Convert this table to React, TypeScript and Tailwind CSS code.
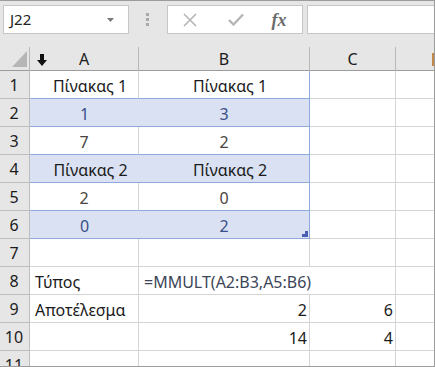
import React from 'react';

const font = { fontFamily: '"Noto Sans", "Open Sans", sans-serif' };

type Cell = { text?: string; align?: 'left' | 'center' | 'right'; tone?: string; head?: boolean };
type Row = { band?: 'white' | 'blue'; cells: Cell[] };

const rows: Row[] = [
  { band: 'white', cells: [{ text: 'Πίνακας 1', align: 'center', head: true }, { text: 'Πίνακας 1', align: 'center', head: true }] },
  { band: 'blue', cells: [{ text: '1', align: 'center', tone: 'text-[#3a5088]' }, { text: '3', align: 'center', tone: 'text-[#3a5088]' }] },
  { band: 'white', cells: [{ text: '7', align: 'center', tone: 'text-[#4a4440]' }, { text: '2', align: 'center', tone: 'text-[#4a4440]' }] },
  { band: 'blue', cells: [{ text: 'Πίνακας 2', align: 'center', head: true }, { text: 'Πίνακας 2', align: 'center', head: true }] },
  { band: 'white', cells: [{ text: '2', align: 'center', tone: 'text-[#4a4440]' }, { text: '0', align: 'center', tone: 'text-[#4a4440]' }] },
  { band: 'blue', cells: [{ text: '0', align: 'center', tone: 'text-[#3a5088]' }, { text: '2', align: 'center', tone: 'text-[#3a5088]' }] },
  { cells: [] },
  { cells: [{ text: 'Τύπος' }, { text: '=MMULT(A2:B3,A5:B6)', tone: 'text-[#3c4658]' }] },
  { cells: [{ text: 'Αποτέλεσμα' }, { text: '2', align: 'right' }, { text: '6', align: 'right' }] },
  { cells: [{}, { text: '14', align: 'right' }, { text: '4', align: 'right' }] },
  { cells: [] },
];

const cols = 'grid grid-cols-[30px_109px_171px_86px_1fr]';

function CellText({ cell }: { cell?: Cell }) {
  if (!cell?.text) return null;
  const justify =
    cell.align === 'center'
      ? `justify-center ${cell.head ? 'pl-[12px]' : ''}`
      : cell.align === 'right'
        ? 'justify-end pr-[2px]'
        : 'justify-start pl-[5px]';
  return (
    <div className={`flex h-full items-end pb-[2px] ${justify}`}>
      <span className={`whitespace-nowrap text-[16px] leading-[20px] ${cell.tone ?? 'text-[#1b1b1b]'}`}>{cell.text}</span>
    </div>
  );
}

export default function App() {
  return (
    <div
      className="w-[435px] h-[367px] overflow-hidden bg-[#e6e6e6] border-t border-r border-b border-[#9c9c9c] flex flex-col"
      style={font}
    >
      {/* toolbar */}
      <div className="h-[46px] shrink-0 flex items-start pt-[4px] pl-[3px]">
        <div className="w-[126px] h-[29px] bg-white border border-[#c6c6c6] flex items-center justify-between pl-[6px] pr-[14px]">
          <span className="text-[15px] text-[#222] leading-none">J22</span>
          <svg width="7" height="4" viewBox="0 0 7 4">
            <path d="M0 0h7L3.5 4z" fill="#7a7a7a" />
          </svg>
        </div>
        <div className="w-[38px] h-[29px] flex items-center pl-[17px]">
          <div className="flex flex-col gap-[2px]">
            <div className="w-[3px] h-[3px] bg-[#a9a9a9]" />
            <div className="w-[3px] h-[3px] bg-[#a9a9a9]" />
            <div className="w-[3px] h-[3px] bg-[#a9a9a9]" />
          </div>
        </div>
        <div className="w-[136px] h-[29px] bg-white border border-[#c6c6c6] flex items-center">
          <div className="w-[44px] flex justify-center">
            <svg width="14" height="14" viewBox="0 0 14 14">
              <path d="M1 1l12 12M13 1L1 13" stroke="#b5b5b5" strokeWidth="1.6" />
            </svg>
          </div>
          <div className="w-[48px] flex justify-center">
            <svg width="16" height="13" viewBox="0 0 16 13">
              <path d="M1 7l4.5 4.5L15 1.5" stroke="#b5b5b5" strokeWidth="2.4" fill="none" />
            </svg>
          </div>
          <div className="flex-1 flex justify-center pr-[4px]">
            <span
              className="text-[18px] italic font-bold text-[#6b6b6b] leading-none"
              style={{ fontFamily: '"Liberation Serif", serif' }}
            >
              fx
            </span>
          </div>
        </div>
        <div className="ml-[4px] flex-1 h-[29px] bg-white border border-[#c6c6c6] border-r-0" />
      </div>

      {/* column headers */}
      <div className={`${cols} h-[24px] shrink-0 border-b border-[#9c9c9c]`}>
        <div className="relative border-r border-[#b8b8b8]">
          <svg className="absolute left-[12px] top-[4px]" width="15" height="16" viewBox="0 0 15 16">
            <path d="M15 0V16H0z" fill="#b6b6b6" />
          </svg>
        </div>
        <div className="relative flex items-center justify-center border-r border-[#b8b8b8]">
          <svg className="absolute left-[7px] top-[7px]" width="10" height="12" viewBox="0 0 10 12">
            <path d="M3 0h4v6h3L5 12 0 6h3z" fill="#111" />
          </svg>
          <span className="text-[16px] text-[#1b1b1b]">A</span>
        </div>
        <div className="flex items-center justify-center border-r border-[#b8b8b8]">
          <span className="text-[16px] text-[#1b1b1b]">B</span>
        </div>
        <div className="flex items-center justify-center border-r border-[#b8b8b8]">
          <span className="text-[16px] text-[#1b1b1b]">C</span>
        </div>
        <div className="flex items-center justify-end">
          <div className="w-[2px] h-[13px] bg-[#c28a4a]" />
        </div>
      </div>

      {/* grid rows */}
      <div className="flex flex-col bg-white">
        {rows.map((row, i) => {
          const inTable = !!row.band;
          const fill = row.band === 'blue' ? 'bg-[#d9e1f2]' : 'bg-white';
          const overflowB = i === 7;
          return (
            <div key={i} className={`${cols} h-[28px] shrink-0`}>
              <div className="bg-[#e6e6e6] border-r border-b border-[#bdbdbd] flex items-center justify-center pr-[1px]">
                <span className="text-[16px] text-[#1b1b1b]">{i + 1}</span>
              </div>
              <div
                className={`${fill} border-b ${inTable ? 'border-[#8ea9db]' : 'border-[#d4d4d4]'} ${
                  row.band === 'blue' ? '' : 'border-r border-r-[#d4d4d4]'
                }`}
              >
                <CellText cell={row.cells[0]} />
              </div>
              <div
                className={`relative z-10 ${fill} border-b ${
                  inTable ? 'border-[#8ea9db] border-r border-r-[#8ea9db]' : overflowB ? 'border-[#d4d4d4]' : 'border-[#d4d4d4] border-r border-r-[#d4d4d4]'
                }`}
              >
                <CellText cell={row.cells[1]} />
                {i === 5 && (
                  <svg className="absolute right-[1px] bottom-[1px]" width="6" height="6" viewBox="0 0 6 6">
                    <path d="M3 0h3v6H0V3h3z" fill="#4a5fb4" />
                  </svg>
                )}
              </div>
              <div className="border-b border-r border-[#d4d4d4]">
                <CellText cell={row.cells[2]} />
              </div>
              <div className="border-b border-[#d4d4d4]" />
            </div>
          );
        })}
      </div>
    </div>
  );
}
